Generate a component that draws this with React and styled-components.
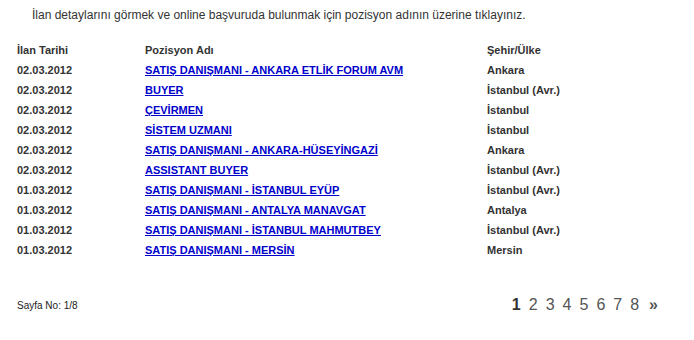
import React from "react";
import styled, { createGlobalStyle } from "styled-components";

const GlobalStyle = createGlobalStyle`
  body {
    margin: 0;
    background: #fff;
    font-family: "Liberation Sans", Arial, sans-serif;
    color: #333;
  }
`;

const Page = styled.div`
  width: 694px;
  height: 340px;
  box-sizing: border-box;
  padding: 8px 0 0 0;
`;

const Intro = styled.p`
  margin: 0 0 0 32px;
  font-size: 12px;
  line-height: 14px;
  color: #333;
`;

const Table = styled.div`
  margin-top: 18px;
  display: flex;
  flex-direction: column;
`;

const Row = styled.div`
  display: grid;
  grid-template-columns: 128px 342px 1fr;
  padding-left: 17px;
  height: 20px;
  align-items: center;
  font-size: 11px;
  font-weight: bold;
  line-height: 20px;
  color: #333;
`;

const JobLink = styled.a`
  color: #0000cc;
  text-decoration: underline;
  cursor: pointer;
`;

const Footer = styled.div`
  margin-top: 36px;
  display: flex;
  justify-content: space-between;
  align-items: center;
  padding: 0 36px 0 17px;
`;

const PageInfo = styled.span`
  font-size: 10px;
  color: #222;
`;

const Pager = styled.div`
  display: flex;
  gap: 8px;
  font-size: 16px;
  color: #555;
`;

const PageNum = styled.a`
  color: ${(p) => (p.$active ? "#333" : "#555")};
  font-weight: ${(p) => (p.$active ? "bold" : "normal")};
  text-decoration: none;
  cursor: pointer;
`;

const Next = styled.a`
  color: #555;
  font-weight: bold;
  text-decoration: none;
  margin-left: 2px;
`;

const jobs = [
  ["02.03.2012", "SATIŞ DANIŞMANI - ANKARA ETLİK FORUM AVM", "Ankara"],
  ["02.03.2012", "BUYER", "İstanbul (Avr.)"],
  ["02.03.2012", "ÇEVİRMEN", "İstanbul"],
  ["02.03.2012", "SİSTEM UZMANI", "İstanbul"],
  ["02.03.2012", "SATIŞ DANIŞMANI - ANKARA-HÜSEYİNGAZİ", "Ankara"],
  ["02.03.2012", "ASSISTANT BUYER", "İstanbul (Avr.)"],
  ["01.03.2012", "SATIŞ DANIŞMANI - İSTANBUL EYÜP", "İstanbul (Avr.)"],
  ["01.03.2012", "SATIŞ DANIŞMANI - ANTALYA MANAVGAT", "Antalya"],
  ["01.03.2012", "SATIŞ DANIŞMANI - İSTANBUL MAHMUTBEY", "İstanbul (Avr.)"],
  ["01.03.2012", "SATIŞ DANIŞMANI - MERSİN", "Mersin"],
];

export default function App() {
  return (
    <Page>
      <GlobalStyle />
      <Intro>
        İlan detaylarını görmek ve online başvuruda bulunmak için pozisyon adının üzerine tıklayınız.
      </Intro>
      <Table>
        <Row>
          <span>İlan Tarihi</span>
          <span>Pozisyon Adı</span>
          <span>Şehir/Ülke</span>
        </Row>
        {jobs.map(([date, title, city]) => (
          <Row key={title}>
            <span>{date}</span>
            <span>
              <JobLink>{title}</JobLink>
            </span>
            <span>{city}</span>
          </Row>
        ))}
      </Table>
      <Footer>
        <PageInfo>Sayfa No: 1/8</PageInfo>
        <Pager>
          {[1, 2, 3, 4, 5, 6, 7, 8].map((n) => (
            <PageNum key={n} $active={n === 1}>
              {n}
            </PageNum>
          ))}
          <Next>»</Next>
        </Pager>
      </Footer>
    </Page>
  );
}
